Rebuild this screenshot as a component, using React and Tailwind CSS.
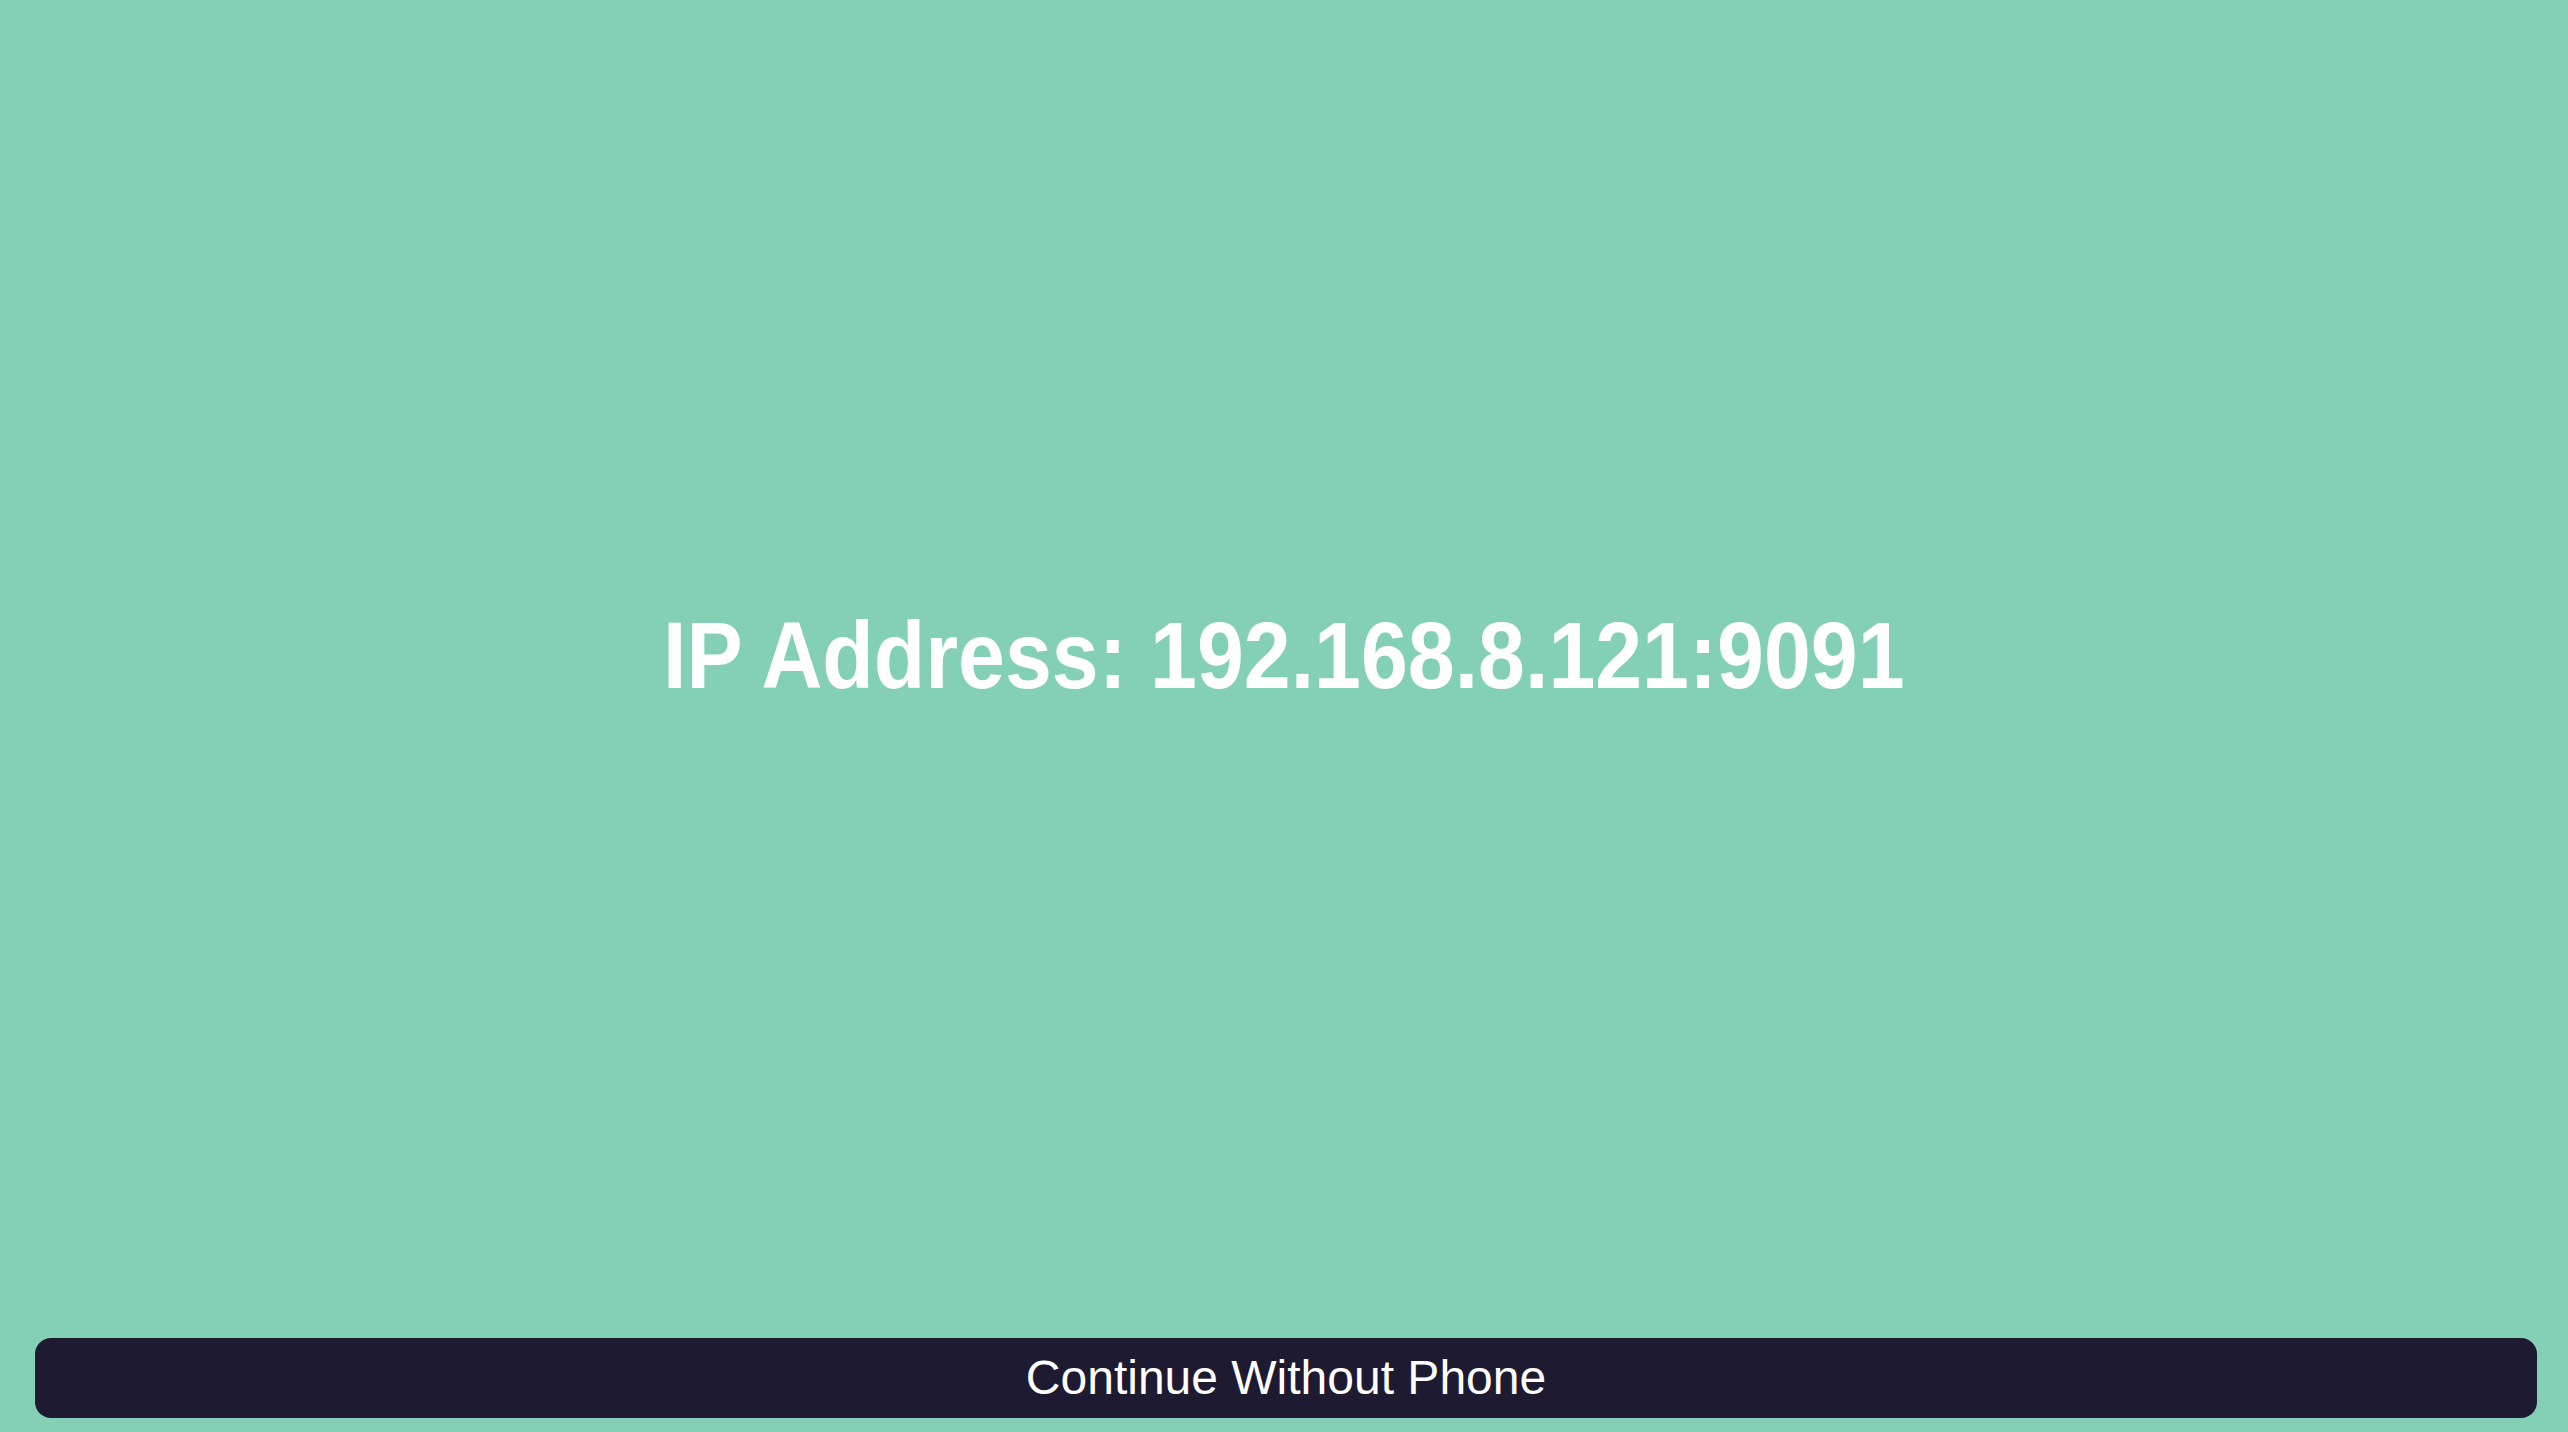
export default function App() {
  return (
    <div className="flex h-screen w-full flex-col bg-[#83d0b6]">
      {/* Address */}
      <div className="flex flex-1 items-center justify-center pb-[28px]">
        <h1
          className="inline-block origin-center scale-x-[0.887] text-[95px] font-bold leading-none text-white"
          style={{ fontFamily: '"Liberation Sans", Arial, sans-serif' }}
        >
          IP Address: 192.168.8.121:9091
        </h1>
      </div>

      <button
        className="mb-[14px] ml-[35px] mr-[31px] flex h-[80px] items-center justify-center rounded-[16px] bg-[#1e1a32] text-[48px] leading-none text-white"
        style={{ fontFamily: '"Liberation Sans", Arial, sans-serif' }}
      >
        Continue Without Phone
      </button>
    </div>
  );
}
